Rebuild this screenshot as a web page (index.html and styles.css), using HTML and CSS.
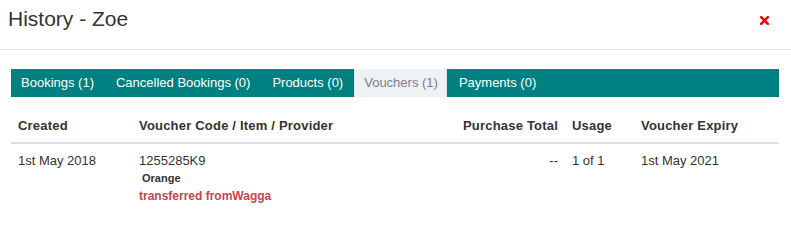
FILE: index.html
```html
<!DOCTYPE html>
<html>
<head>
<meta charset="utf-8">
<link rel="stylesheet" href="styles.css">
</head>
<body>
<div class="modal">
  <div class="modal-header">
    <h4 class="title">History - Zoe</h4>
    <button class="close" aria-label="Close">
      <svg width="9" height="9" viewBox="0 0 9 9"><path d="M1.2 1.2 L7.8 7.8 M7.8 1.2 L1.2 7.8" stroke="#ff0000" stroke-width="2.6" stroke-linecap="square"/></svg>
    </button>
  </div>
  <div class="modal-body">
    <ul class="tabs">
      <li class="tab">Bookings (1)</li>
      <li class="tab">Cancelled Bookings (0)</li>
      <li class="tab">Products (0)</li>
      <li class="tab active">Vouchers (1)</li>
      <li class="tab">Payments (0)</li>
    </ul>
    <table class="table">
      <colgroup>
        <col class="c1"><col class="c2"><col class="c3"><col class="c4"><col class="c5">
      </colgroup>
      <thead>
        <tr>
          <th>Created</th>
          <th>Voucher Code / Item / Provider</th>
          <th class="right">Purchase Total</th>
          <th>Usage</th>
          <th>Voucher Expiry</th>
        </tr>
      </thead>
      <tbody>
        <tr>
          <td>1st May 2018</td>
          <td>
            <div>1255285K9</div>
            <div class="item">Orange</div>
            <div class="transfer">transferred fromWagga</div>
          </td>
          <td class="right">--</td>
          <td>1 of 1</td>
          <td>1st May 2021</td>
        </tr>
      </tbody>
    </table>
  </div>
</div>
</body>
</html>
```
FILE: styles.css
```css
html, body {
  margin: 0;
  padding: 0;
  background: #fff;
}
body {
  font-family: "Liberation Sans", Arial, sans-serif;
  font-size: 13px;
  color: #333;
}
.modal {
  width: 791px;
}
.modal-header {
  height: 50px;
  border-bottom: 1px solid #e5e5e5;
  display: flex;
  align-items: flex-start;
  justify-content: space-between;
  padding: 0 22px 0 8px;
  box-sizing: border-box;
}
.title {
  margin: 0;
  padding-top: 7px;
  font-size: 21px;
  font-weight: normal;
  line-height: 23px;
  color: #333;
}
.close {
  border: 0;
  background: none;
  padding: 0;
  margin-top: 16px;
  width: 9px;
  height: 9px;
  line-height: 0;
}
.close svg {
  display: block;
}
.modal-body {
  padding: 19px 12px 0 11px;
}
.tabs {
  list-style: none;
  margin: 0;
  padding: 0;
  display: flex;
  background: #008080;
  height: 28px;
}
.tab {
  color: #fff;
  line-height: 28px;
  padding: 0 10px;
  margin-right: 2px;
  white-space: nowrap;
}
.tab.active {
  background: #eff2f4;
  color: #7b7e93;
  padding: 0 8px 0 9px;
  border-left: 1px solid #dde2e6;
  border-right: 1px solid #dde2e6;
  margin-left: -1px;
}
.table {
  width: 768px;
  margin-top: 12px;
  border-collapse: collapse;
  table-layout: fixed;
}
.c1 { width: 121px; }
.c2 { width: 322px; }
.c3 { width: 111px; }
.c4 { width: 69px; }
.c5 { width: 145px; }
.table th,
.table td {
  padding: 8px 7px;
  text-align: left;
  vertical-align: top;
  line-height: 18px;
}
.table th {
  font-weight: bold;
  letter-spacing: 0.2px;
  border-bottom: 2px solid #dddddd;
  padding-bottom: 7px;
}
.table .right {
  text-align: right;
}
.item {
  font-size: 11px;
  font-weight: bold;
  padding-left: 3px;
  line-height: 18px;
  margin-top: -1px;
}
.transfer {
  font-size: 12px;
  font-weight: bold;
  color: #c7444c;
  line-height: 18px;
  margin-top: 0;
}
```
